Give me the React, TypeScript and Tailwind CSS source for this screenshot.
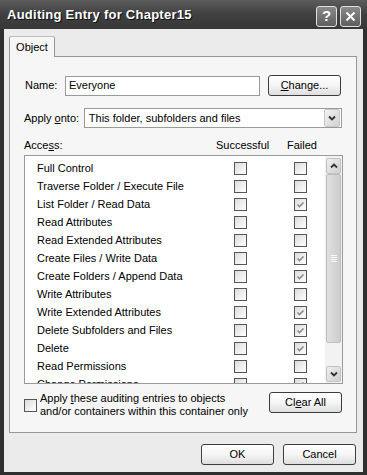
import React from 'react';

type Row = { label: string; ok: boolean; fail: boolean };

const rows: Row[] = [
    { label: 'Full Control', ok: false, fail: false },
    { label: 'Traverse Folder / Execute File', ok: false, fail: false },
    { label: 'List Folder / Read Data', ok: false, fail: true },
    { label: 'Read Attributes', ok: false, fail: false },
    { label: 'Read Extended Attributes', ok: false, fail: false },
    { label: 'Create Files / Write Data', ok: false, fail: true },
    { label: 'Create Folders / Append Data', ok: false, fail: true },
    { label: 'Write Attributes', ok: false, fail: false },
    { label: 'Write Extended Attributes', ok: false, fail: true },
    { label: 'Delete Subfolders and Files', ok: false, fail: true },
    { label: 'Delete', ok: false, fail: true },
    { label: 'Read Permissions', ok: false, fail: false },
    { label: 'Change Permissions', ok: false, fail: true },
];

const CheckBox: React.FC<{ checked?: boolean }> = ({ checked }) => (
    <div className="w-[13px] h-[13px] shrink-0 border border-[#555] bg-gradient-to-br from-[#dcdcdc] to-white flex items-center justify-center">
        {checked && (
            <svg width="9" height="9" viewBox="0 0 9 9">
                <path d="M1.5 4.5 L3.5 6.5 L7.5 2.5" fill="none" stroke="#8a8a8a" strokeWidth="1.6" />
            </svg>
        )}
    </div>
);

const Button: React.FC<{ className?: string; children: React.ReactNode }> = ({ className, children }) => (
    <button className={`h-[21px] w-[73px] rounded-[3px] border border-[#3c3c3c] bg-gradient-to-b from-white via-[#f5f5f5] to-[#dedede] flex items-center justify-center text-[11px] ${className ?? ''}`}>
        {children}
    </button>
);

const Chevron: React.FC<{ up?: boolean }> = ({ up }) => (
    <svg width="8" height="6" viewBox="0 0 8 6" className={up ? 'rotate-180' : ''}>
        <path d="M1 1.5 L4 4.5 L7 1.5" fill="none" stroke="#333" strokeWidth="1.8" />
    </svg>
);

const ScrollBtn: React.FC<{ up?: boolean }> = ({ up }) => (
    <div className="h-[16px] mx-[1px] rounded-[2px] border border-[#c2c2c2] bg-gradient-to-br from-[#efefef] to-[#cfcfcf] flex items-center justify-center">
        <Chevron up={up} />
    </div>
);

const App: React.FC = () => {
    return (
        <div className="w-[367px] h-[475px] bg-[#2f2f2f] flex flex-col text-[11px] text-black [font-family:'Liberation_Sans',Arial,sans-serif]">
            {/* title bar */}
            <div className="h-[29px] shrink-0 flex items-center pl-[7px] pr-[6px] bg-gradient-to-b from-[#5c5c5c] via-[#404040] to-[#373737]">
                <span className="flex-1 text-white font-bold text-[13px] tracking-[0.25px] [text-shadow:1px_1px_0_#111]">Auditing Entry for Chapter15</span>
                <div className="flex gap-[3px] mt-[4px]">
                    <div className="w-[21px] h-[21px] rounded-[3px] border border-[#e0e0e0] bg-gradient-to-b from-[#8a8a8a] to-[#5e5e5e] flex items-center justify-center text-white font-bold text-[15px]">?</div>
                    <div className="w-[21px] h-[21px] rounded-[3px] border border-[#e0e0e0] bg-gradient-to-b from-[#8a8a8a] to-[#5e5e5e] flex items-center justify-center">
                        <svg width="11" height="11" viewBox="0 0 11 11">
                            <path d="M1.5 1.5 L9.5 9.5 M9.5 1.5 L1.5 9.5" stroke="white" strokeWidth="2" />
                        </svg>
                    </div>
                </div>
            </div>

            {/* body */}
            <div className="flex-1 mx-[4px] mb-[3px] bg-[#ebebeb] flex flex-col pl-[5px] pr-[6px] pt-[7px]">
                <div className="flex">
                    <div className="relative z-10 -mb-px h-[21px] w-[46px] border border-b-0 border-[#979797] border-t-[#bdbdbd] rounded-t-[2px] bg-[#f6f6f6] flex items-center justify-center">
                        Object
                    </div>
                </div>

                <div className="h-[377px] border border-[#979797] bg-[#f6f6f6] flex flex-col px-[14px]">
                    {/* name */}
                    <div className="flex items-center mt-[18px] h-[21px]">
                        <span className="w-[41px] pl-[1px]">Name:</span>
                        <div className="w-[195px] h-[20px] border border-[#9a9a9a] bg-white flex items-center px-[3px]">Everyone</div>
                        <Button className="ml-[8px]"><span><u>C</u>hange...</span></Button>
                    </div>

                    {/* apply onto */}
                    <div className="flex items-center mt-[12px] h-[20px]">
                        <span className="w-[60px]">Apply <u>o</u>nto:</span>
                        <div className="w-[259px] h-[20px] border border-[#9a9a9a] bg-white flex items-center pl-[4px] pr-[1px]">
                            <span className="flex-1">This folder, subfolders and files</span>
                            <div className="w-[16px] h-[18px] rounded-[2px] border border-[#c8c8c8] bg-gradient-to-br from-[#f2f2f2] to-[#d2d2d2] flex items-center justify-center">
                                <Chevron />
                            </div>
                        </div>
                    </div>

                    {/* header */}
                    <div className="flex items-center mt-[11px] h-[13px]">
                        <span className="w-[192px]">Acce<u>s</u>s:</span>
                        <span className="w-[71px]">Successful</span>
                        <span>Failed</span>
                    </div>

                    {/* list */}
                    <div className="mt-[3px] w-[319px] h-[229px] border border-[#9a9a9a] bg-white flex overflow-hidden">
                        <div className="flex-1 pt-[3px] overflow-hidden">
                            {rows.map((r) => (
                                <div key={r.label} className="flex items-center h-[18px] pl-[12px]">
                                    <span className="w-[197px]">{r.label}</span>
                                    <CheckBox checked={r.ok} />
                                    <div className="w-[47px]" />
                                    <CheckBox checked={r.fail} />
                                </div>
                            ))}
                        </div>
                        <div className="w-[17px] bg-[#f2f2f2] flex flex-col pt-[2px] pb-[1px]">
                            <ScrollBtn up />
                            <div className="h-[169px] mx-[1px] rounded-[2px] border border-[#bdbdbd] bg-gradient-to-r from-[#e0e0e0] to-[#cdcdcd] flex items-center justify-center">
                                <div className="flex flex-col gap-[1px]">
                                    <div className="w-[6px] h-px bg-[#f8f8f8]" />
                                    <div className="w-[6px] h-px bg-[#f8f8f8]" />
                                    <div className="w-[6px] h-px bg-[#f8f8f8]" />
                                    <div className="w-[6px] h-px bg-[#f8f8f8]" />
                                </div>
                            </div>
                            <div className="flex-1" />
                            <ScrollBtn />
                        </div>
                    </div>

                    {/* bottom row */}
                    <div className="flex mt-[8px]">
                        <div className="flex items-center w-[245px]">
                            <CheckBox />
                            <span className="ml-[3px] leading-[13px]">
                                Apply <u>t</u>hese auditing entries to objects<br />and/or containers within this container only
                            </span>
                        </div>
                        <Button><span>Cl<u>e</u>ar All</span></Button>
                    </div>
                </div>

                <div className="flex justify-end gap-[9px] mt-[11px] pr-px">
                    <Button>OK</Button>
                    <Button>Cancel</Button>
                </div>
            </div>
        </div>
    );
};

export default App;
